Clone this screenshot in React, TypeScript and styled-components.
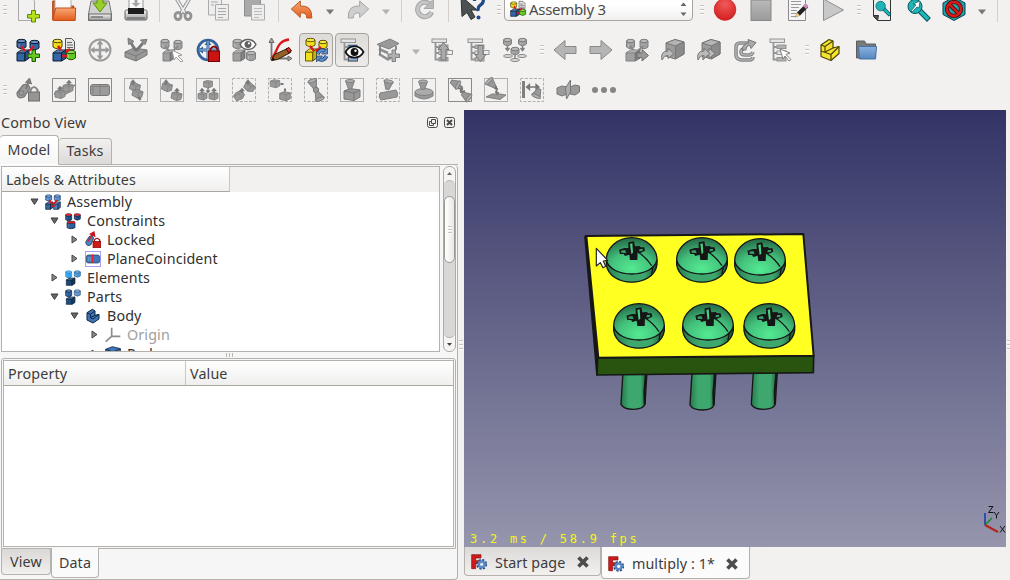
import React from "react";
import styled, { createGlobalStyle, css } from "styled-components";

const Global = createGlobalStyle`
  * { box-sizing: border-box; }
  html, body { margin: 0; padding: 0; overflow: hidden; background: #f2f1f0; }
  body { font-family: "Noto Sans", "Open Sans", sans-serif; font-size: 14.3px; letter-spacing: 0.13px; color: #3c3c3c; }
`;

/* ---------- drawing primitives for icons (24 x 24 grid) ---------- */

const GRAY = "#a0a0a0";
const GLINE = "#808080";
const BLUE = "#3465a4";
const NAVY = "#0b1f33";

type Shape = { x: number; y: number; w?: number; h?: number; c?: string; l?: string };

const Cyl = ({ x, y, w = 9, h = 10, c = GRAY, l = GLINE }: Shape) => (
  <g stroke={l} strokeWidth="1" fill={c}>
    <path d={`M${x} ${y + 2}v${h - 4}q${w / 2} 3.500 ${w} 0v${4 - h}z`} />
    <ellipse cx={x + w / 2} cy={y + 2} rx={w / 2} ry="1.700" />
    <ellipse cx={x + w / 2} cy={y + 2} rx={w / 2 - 1} ry="1" fill="#fff" fillOpacity=".3" stroke="none" />
    <path d={`M${x + 2} ${y + 5}v${h - 7}`} stroke="#fff" strokeOpacity=".3" />
  </g>
);

const Cube = ({ x, y, w = 11, h = 10, c = GRAY, l = GLINE }: Shape) => {
  const s = Math.max(2, h * 0.25);
  const f = w * 0.66;
  const d = w - f;
  return (
    <g stroke={l} strokeWidth="1" strokeLinejoin="round" fill={c}>
      <path d={`M${x} ${y + s}h${f}v${h - s}h${-f}z`} />
      <path d={`M${x} ${y + s}l${d} ${-s}h${f}l${-d} ${s}z`} />
      <path d={`M${x} ${y + s}l${d} ${-s}h${f}l${-d} ${s}z`} fill="#fff" fillOpacity=".18" stroke="none" />
      <path d={`M${x + f} ${y + s}l${d} ${-s}v${h - s}l${-d} ${s}z`} />
      <path d={`M${x + f} ${y + s}l${d} ${-s}v${h - s}l${-d} ${s}z`} fill="#000" fillOpacity=".18" stroke="none" />
    </g>
  );
};

const Plus = ({ x, y, c = GRAY, l = GLINE }: Shape) => (
  <path d={`M${x + 4} ${y}h3.500v4h4v3.500h-4v4h-3.500v-4h-4v-3.500h4z`} fill={c} stroke={l} />
);

const Frame = ({ dash, dark }: { dash?: boolean; dark?: boolean }) => (
  <rect x=".5" y=".5" width="23" height="23" fill="none" stroke={dark ? "#8a8a8a" : "#b0b0b0"} strokeDasharray={dash ? "3 1.500" : undefined} />
);

const UpArrow = ({ x, y }: Shape) => (
  <path d={`M${x} ${y}l-2.500 3h1.800v2h1.400v-2h1.800z`} fill="#777" stroke="#707070" strokeWidth=".4" />
);

/* a cube tilted as the constraint icons show it */
const Blob = ({ x, y, r = 0, s = 1 }: { x: number; y: number; r?: number; s?: number }) => (
  <g transform={`translate(${x} ${y}) rotate(${r}) scale(${s})`} stroke={GLINE} strokeWidth=".9" strokeLinejoin="round">
    <path d="M-5 -2.500L-1 -4L5 -3V2.500L1 4.500L-5 3z" fill="#999" />
    <path d="M-5 -2.500L1 -1.300L5 -3M1 -1.300V4.500" fill="none" strokeWidth=".7" />
  </g>
);

const Cone = ({ r = 0, x = 12, y = 7 }: { r?: number; x?: number; y?: number }) => (
  <g transform={`translate(${x} ${y}) rotate(${r})`} fill="#999" stroke={GLINE}>
    <path d="M-4.500 -3.500l3 8h3l3 -8z" />
    <ellipse cy="-3.500" rx="4.500" ry="1.500" fill="#b0b0b0" />
  </g>
);

const Tree = () => (
  <g fill="#e4e4e4" stroke="#949494">
    <path d="M4.500 4v17.500h4M4.500 9h4M4.500 15h4" fill="none" strokeWidth="1.800" />
    <rect x="1" y="1" width="14.500" height="3.500" />
    <rect x="8" y="7" width="9" height="3.500" fill="#b0b0b0" />
    <rect x="8" y="13" width="9" height="3.500" />
    <rect x="8" y="19.500" width="9" height="3.500" fill="#b0b0b0" />
  </g>
);

const Eye = ({ x, y, c = "#111", s = 1 }: { x: number; y: number; c?: string; s?: number }) => (
  <g transform={`translate(${x} ${y}) scale(${s})`}>
    <path d="M-9 0C-5 -7.500 5 -7.500 9 0C5 7.500 -5 7.500 -9 0z" fill="#fff" stroke={c} strokeWidth="1.700" />
    <circle r="3.900" fill={c} />
    <circle cx="1" cy="-1.300" r="1.200" fill="#fff" />
  </g>
);

const Bends = ({ g }: { g?: boolean }) => (
  <path d="M5 8l4 5M18 8l-5 5" stroke={g ? "#8a8a8a" : "#e0141c"} strokeWidth="2.200" fill="none" />
);

const FatArrow = ({ flip }: { flip?: boolean }) => (
  <g transform={flip ? "translate(24 0) scale(-1 1)" : undefined}>
    <path d="M1 12L12 2.500v6h11v7h-11v6z" fill="#b5b5b5" stroke="#898989" strokeLinejoin="round" />
  </g>
);

const Lens = () => (
  <g>
    <path d="M14 12l7 7" stroke="#06555a" strokeWidth="5.500" strokeLinecap="square" />
    <path d="M14 12l7 7" stroke="#1fb5b8" strokeWidth="3.500" strokeLinecap="square" />
    <circle cx="9" cy="7.500" r="7" fill="#1fb5b8" stroke="#06555a" />
  </g>
);

const CurveArrow = ({ o = 0 }: { o?: number }) => (
  <path d={`M${1 + o} 22q-2 -9 6 -9v-3l6 5.500l-6 5v-3q-4 -.5 -6 4.500z`} fill="#b9b9b9" stroke="#777" />
);

const IsoCube = () => (
  <g stroke="#777" strokeLinejoin="round">
    <path d="M5 5L14 1.500L23 4V16L14 21L5 18z" fill="#9c9c9c" />
    <path d="M5 5L14 1.500L23 4L14.500 8z" fill="#b4b4b4" />
    <path d="M14.500 8L23 4V16L14.500 21z" fill="#8b8b8b" />
  </g>
);

const icons: Record<string, React.ReactNode> = {
  newDoc: (
    <g>
      <path d="M2.500 -1h12l4 4v19.500h-16z" fill="#f1f1f1" stroke="#a8a8a8" />
      <path d="M15.500 12.500h4v4h4v3.500h-4v4h-4v-4h-4v-3.500h4z" fill="#b7e11c" stroke="#5f8708" />
    </g>
  ),
  open: (
    <g>
      <path d="M.7 22V3h7v5h14v14z" fill="#d35b1c" stroke="#b24411" />
      <path d="M3 20V-1h13l3 3v18z" fill="#fafafa" stroke="#b0b0b0" />
      <path d="M.7 22l3 -12h20l-.5 12.500h-22z" fill="url(#orange)" stroke="#c14f17" />
    </g>
  ),
  save: (
    <g>
      <path d="M3 3h18l2.500 13v6.500h-23v-6.500z" fill="#d0d0d0" stroke="#777" />
      <path d="M.8 16h22.400v6.300H.8z" fill="url(#metal)" stroke="#666" />
      <path d="M3 19h12" stroke="#777" strokeWidth="1.500" />
      <path d="M9 -2h6v7h4l-7 9l-7 -9h4z" fill="#98ce2a" stroke="#5c8f0c" />
    </g>
  ),
  print: (
    <g>
      <path d="M5 -1h14v12H5z" fill="#f7f7f7" stroke="#999" />
      <path d="M10.500 0h3v5h3l-4.500 4l-4.500 -4h3z" fill="#a5a5a5" />
      <rect x="1" y="12" width="22" height="10" rx="1.500" fill="url(#metal)" stroke="#666" />
      <path d="M4 10h16v6H4z" fill="#1d1d1d" />
      <path d="M3 20h18" stroke="#555" />
    </g>
  ),
  cut: (
    <g fill="none" stroke="#a2a2a2">
      <path d="M4.500 -1l10 17M19.500 -1l-10 17" stroke="#8f8f8f" strokeWidth="3.500" />
      <path d="M4.500 -1l10 17M19.500 -1l-10 17" stroke="#eee" strokeWidth="1.700" />
      <ellipse cx="7" cy="18" rx="3" ry="3.500" strokeWidth="2.800" stroke="#929292" />
      <ellipse cx="17" cy="18" rx="3" ry="3.500" strokeWidth="2.800" stroke="#929292" />
    </g>
  ),
  copy: (
    <g fill="#ededed" stroke="#aaa">
      <path d="M1.500 0h13v17h-13z" />
      <path d="M8.500 6.500h13v15.500h-13z" />
      <path d="M4 4h7M4 7h3M11 10.500h8M11 13.500h8M11 16.500h8M11 19.500h5" />
    </g>
  ),
  paste: (
    <g fill="#a9a9a9" stroke="#8e8e8e">
      <path d="M1.500 0h16v18h-16z" />
      <path d="M8.500 6.500h13v15.500h-13z" fill="#ededed" stroke="#aaa" />
      <path d="M11 10.500h8M11 13.500h8M11 16.500h8M11 19.500h5" stroke="#bbb" />
    </g>
  ),
  undo: <path d="M1.300 11l9 -8v5q12 -1 11.500 12h-5q0 -6 -6.500 -5v4.500z" fill="url(#orange)" stroke="#b95a22" strokeLinejoin="round" />,
  redo: <path d="M22.700 11l-9 -8v5q-12 -1 -11.500 12h5q0 -6 6.500 -5v4.500z" fill="#cfcfcf" stroke="#a3a3a3" strokeLinejoin="round" />,
  refresh: (
    <g>
      <path d="M18 6.500a7.200 7.200 0 1 0 1.500 7.500" fill="none" stroke="#a3a3a3" strokeWidth="5" />
      <path d="M18 6.500a7.200 7.200 0 1 0 1.500 7.500" fill="none" stroke="#c6c6c6" strokeWidth="3.200" />
      <path d="M21.500 1v9.500h-9.500z" fill="#bababa" stroke="#a8a8a8" />
    </g>
  ),
  whats: (
    <g>
      <path d="M1 -2l16 14h-6l4 7l-4 2.500l-4 -7l-5 4z" fill="#4c5252" stroke="#2c3030" />
      <path d="M14.500 3q0 -4 4.500 -4t4.300 3.700q0 2.500 -3 4.500t-2 5.800" fill="none" stroke="#204a87" strokeWidth="3.200" />
      <circle cx="18.500" cy="19.500" r="2" fill="#204a87" />
    </g>
  ),
  record: <circle cx="12" cy="11.500" r="10.800" fill="url(#red)" stroke="#c22" strokeWidth=".8" />,
  stop: <rect x="2" y="2" width="20" height="20.500" fill="url(#metal2)" stroke="#878787" />,
  edit: (
    <g>
      <path d="M3.500 -1h17v23.500h-17z" fill="#f5f5f5" stroke="#8a8a8a" />
      <path d="M6 3.500h10M6 6.500h10M6 9.500h8M6 12.500h6M6 15.500h5M6 18.500h5" stroke="#999" />
      <path d="M10 19.500l2 -5l8 -8l3 3l-8 8z" fill="#222" />
      <path d="M18 8l2.500 -3l3 3l-2.500 3z" fill="#c88ab3" />
      <path d="M10 19.500l2 -5l3 3z" fill="#edc98a" />
    </g>
  ),
  play: <path d="M2.500 1L22.500 12L2.500 22.500z" fill="#c8c8c8" stroke="#8e8e8e" />,
  fitAll: (
    <g>
      <path d="M3.500 -1h17v23.500h-13l-4 -4z" fill="#eee" stroke="#333" />
      <path d="M3.500 17.500h5l-1 5z" fill="#555" stroke="#333" />
      <g transform="translate(4.500 3) scale(.68)"><Lens /></g>
    </g>
  ),
  fitSel: <g transform="translate(0 1)"><Lens /><path d="M5 12l5 -6l-3 -1l7 -3l-1 7l-2 -1l-5 5z" fill="#fff" stroke="#06555a" strokeWidth=".7" /></g>,
  drawStyle: (
    <g>
      <path d="M1 5l11 -6l11 6v11.500l-11 6l-11 -6z" fill="#1ba4ad" stroke="#083f49" />
      <circle cx="12" cy="11" r="7" fill="none" stroke="#5a0808" strokeWidth="4.200" />
      <path d="M7 6l10 10" stroke="#5a0808" strokeWidth="4" />
      <circle cx="12" cy="11" r="7" fill="none" stroke="#d51c1c" strokeWidth="2.400" />
      <path d="M7 6l10 10" stroke="#d51c1c" strokeWidth="2.400" />
    </g>
  ),
  box: <Cube x={6} y={1} w={17} h={20} c="#bdd" l="#8a9a9a" />,
  asmNew: (
    <g>
      <Cyl x={1} y={1} c={BLUE} l={NAVY} /><Cyl x={14} y={2} c={BLUE} l={NAVY} />
      <Cube x={1} y={12} w={12} h={11} c={BLUE} l={NAVY} /><Bends />
      <Plus x={12} y={12} c="#67c920" l="#1d5905" />
    </g>
  ),
  asmPart: (
    <g>
      <Cyl x={1} y={1} c="#f2d90c" l="#4e4300" />
      <path d="M13.500 .5h6l3 3v8h-9z" fill="#e6e6e6" stroke="#555" />
      <path d="M15 4.500h5M15 7h6M15 9.500h6" stroke="#666" />
      <Cube x={1} y={12} w={13} h={11} c={BLUE} l={NAVY} />
      <Cyl x={14.500} y={12} c="#67c920" l="#1d5905" />
      <path d="M6 8l3 4M18 11l-4 3M10 18h5" stroke="#e0141c" strokeWidth="2.500" />
    </g>
  ),
  move: (
    <g fill="none" stroke={GLINE}>
      <circle cx="12" cy="12" r="10.500" strokeWidth="2" stroke="#9c9c9c" />
      <path d="M12 4v16M4 12h16" strokeWidth="2.400" stroke="#9c9c9c" />
      <path d="M12 2l-3.300 4.500h6.600zM12 22l-3.300 -4.500h6.600zM2 12l4.500 -3.300v6.600zM22 12l-4.500 -3.300v6.600z" fill="#999" stroke="none" />
    </g>
  ),
  axial: (
    <g strokeLinejoin="round">
      <path d="M1 14l9 -4l13 2v5l-11 6l-11 -4z" fill="#999" stroke="#777" />
      <path d="M1 14l11 4l11 -6M12 18v5" fill="none" stroke="#777" />
      <path d="M12 13L7 5M12 13L19 5" stroke="#777" strokeWidth="2.800" />
      <path d="M4 0l6 3.500l-5.500 3zM23 1.500l-6.500 .5l4.500 4.500z" fill="#909090" stroke="#777" />
    </g>
  ),
  asmSel: (
    <g>
      <Cyl x={1} y={1} w={8} /><Cyl x={14} y={2} w={8} /><Cube x={3} y={12} w={11} h={11} /><Bends g />
      <path d="M12 12l10 5l-4 1l5 5l-2 1l-5 -5l-2 3z" fill="#fff" stroke="#999" />
    </g>
  ),
  moveLock: (
    <g>
      <circle cx="12" cy="12" r="10" fill="none" strokeWidth="2.700" stroke="#35629b" />
      <path d="M12 3v18M3 12h18" strokeWidth="3" stroke="#35629b" />
      <path d="M12 2l-3.500 5h7zM2 12l5 -3.500v7z" fill="#35629b" />
      <path d="M12 3v18M3 12h18" stroke="#9bc3ea" />
      <path d="M14.500 14v-3q3.500 -5 7 0v3" fill="none" stroke="#8d0c0c" strokeWidth="2" />
      <rect x="12.500" y="13" width="11" height="10.500" fill="#c91414" stroke="#700" />
    </g>
  ),
  asmEye: (
    <g>
      <Cyl x={1} y={1} w={9} /><Cube x={1} y={12} w={12} h={11} /><Cyl x={14.500} y={13} w={9} />
      <Eye x={16} y={6.500} c="#606060" s={0.88} />
    </g>
  ),
  trace: (
    <g fill="none">
      <path d="M3.500 22V3M2 20.500h20" stroke="#777" strokeWidth="1.800" />
      <path d="M3.500 0l-2.500 4.500h5zM24 20.500l-4 -2.500v5z" fill="#aaa" stroke="#666" />
      <path d="M4 20C10 14 8 3 21 1.500" stroke="#d8161b" strokeWidth="2.300" />
      <path d="M3.500 22.500l3 -6l13 -6l3 4l-13 7z" fill="#93602a" stroke="#301b06" />
      <path d="M18 11l3 -1.500l2.500 3.500l-2.700 1.700z" fill="#d33" stroke="#400" />
      <path d="M3.500 22.500l1.500 -3l2 2.500z" fill="#111" />
    </g>
  ),
  asmAuto: (
    <g>
      <Cyl x={2} y={0} w={9} h={9} c="#f3df17" l="#625600" /><Cyl x={15} y={2} w={8} h={9} c="#f3df17" l="#625600" />
      <Cube x={1.500} y={11} w={11} h={12} c="#f3df17" l="#625600" />
      <path d="M6 8l4 5M17 9l-5 4" stroke="#e0141c" strokeWidth="2.300" />
      <path d="M13.500 16q3 -6 8 -2.500M22.500 18q-3 6 -8 2.500" fill="none" stroke="#1d3d68" strokeWidth="4" />
      <path d="M13.500 16q3 -6 8 -2.500M22.500 18q-3 6 -8 2.500" fill="none" stroke="#5d8fca" strokeWidth="2.400" />
      <path d="M23.500 10v6h-6zM12.500 24v-6h6z" fill="#5d8fca" stroke="#1d3d68" strokeWidth=".7" />
    </g>
  ),
  treeEye: <g><Tree /><rect x="8.500" y="7" width="9" height="4" fill={BLUE} /><rect x="8.500" y="19" width="9" height="4" fill="#8ab0d8" stroke="#555" /><Eye x={14.500} y={14} /></g>,
  layers: (
    <g fill="#999" stroke={GLINE} strokeLinejoin="round">
      <path d="M3 11l9 4M3 16l9 5.500l3 -2" fill="none" strokeWidth="2.500" stroke="#8d8d8d" />
      <path d="M4 8v9M20 8v4" strokeWidth="1.800" />
      <path d="M1 6.500l13 -5.500l9 4.500l-10 5.500z" />
      <Plus x={12} y={12} c="#b0b0b0" />
    </g>
  ),
  treeUp: <g><Tree /><rect x="16" y="12.500" width="5.500" height="4" fill="#eee" stroke="#999" /><path d="M12.500 4.500l-5.500 7h3v10.500h5v-10.500h3z" fill="#aaa" stroke="#777" /></g>,
  treeDown: <g><Tree /><rect x="16.500" y="12.500" width="5.500" height="4" fill="#eee" stroke="#999" /><path d="M13.500 23.500l-5.500 -7h3v-9h5v9h3z" fill="#aaa" stroke="#777" /></g>,
  asmTree: (
    <g>
      <g fill="#ddd" stroke="#858585"><ellipse cx="5" cy="18" rx="4.500" ry="1.500" /><ellipse cx="19" cy="18" rx="4.500" ry="1.500" /><ellipse cx="12" cy="22" rx="4.500" ry="1.500" /></g>
      <Cyl x={.5} y={0} w={8} h={8} /><Cyl x={15.500} y={0} w={8} h={8} /><Cyl x={8} y={9} w={8} h={8} />
      <path d="M12 17v4M4.500 8v4M19.500 8v4M2.500 10l2 2.500l2 -2.500M17.500 10l2 2.500l2 -2.500" stroke="#808080" fill="none" strokeWidth="1.500" />
    </g>
  ),
  back: <FatArrow />,
  forward: <FatArrow flip />,
  asmGo: (
    <g>
      <Cyl x={1.500} y={1} w={8} /><Cyl x={15} y={1} w={8} /><Bends g /><Cube x={1} y={12} w={14} h={11} />
      <path d="M12 15h5v-3.500l6.500 6l-6.500 5.500v-3.500h-5z" fill="#999" stroke="#6f6f6f" />
    </g>
  ),
  cubeGo: <g><IsoCube /><CurveArrow /></g>,
  cubeGo2: <g><IsoCube /><CurveArrow o={5} /><CurveArrow /></g>,
  linkGo: (
    <g fill="none">
      <path d="M15 5H7q-4 0 -4 4v8q0 4 5 5h8q4 0 4 -3M11 11q-3 0 -3 3t4 3h4q3 0 4 -3" stroke="#858585" strokeWidth="3.600" />
      <path d="M15 5H7q-4 0 -4 4v8q0 4 5 5h8q4 0 4 -3M11 11q-3 0 -3 3t4 3h4q3 0 4 -3" stroke="#bdbdbd" strokeWidth="1.200" />
      <path d="M9 12q1 -7 7 -7l-1 -3.500l8 3l-5 6l-1 -3q-4 0 -4 4.500z" fill="#aaa" stroke="#777" />
    </g>
  ),
  treeSel: <g><Tree /><path d="M11 11l10 4l-4 1.500l5 5l-2 1.500l-4 -5l-2 3z" fill="#fff" stroke="#808080" /></g>,
  yellowPart: (
    <g fill="#f5e332" stroke="#4e4500" strokeWidth="1.200" strokeLinejoin="round">
      <path d="M3 7L11 1.500L15 3V10L21 8.500V15.500L13 22.500L3 18.500z" />
      <path d="M3 7L7 8.500L15 3M7 8.500V14L15 10M3 13L13 16.500L21 8.500M13 16.500V22.500" fill="none" />
    </g>
  ),
  folder: (
    <g>
      <path d="M2.500 20V3h8l1.500 3h9.500v14z" fill="#77797a" stroke="#5b5c5d" />
      <path d="M4.500 8.500h18l-1 12.500h-16z" fill="url(#folder)" stroke="#48729f" />
    </g>
  ),
  lock: (
    <g>
      <path d="M1 15l6 -8q5 -2 7 3l-6 9q-7 3 -7 -4z" fill="#999" stroke="#777" strokeWidth="1.300" />
      <circle cx="5.500" cy="15" r="2.500" fill="none" stroke="#777" />
      <path d="M10 11l2.500 -7" stroke="#777" strokeWidth="1.800" />
      <path d="M9.500 4.500l4 -4.500l2 6z" fill="#808080" stroke="#777" />
      <path d="M14.500 15v-3q3.500 -6 7 0v3" fill="none" stroke="#888" strokeWidth="2.200" />
      <rect x="12.500" y="14" width="11" height="9" fill="#959595" stroke="#6d6d6d" />
    </g>
  ),
  plane: (
    <g><Frame dark /><path d="M2 16l7 -6l14 -3l-7 8l-8 4z" fill="#aaa" stroke="#808080" /><Blob x={8} y={16} /><Blob x={16} y={10} /><UpArrow x={8} y={8} /><UpArrow x={17} y={2} /></g>
  ),
  coincident: <g><Frame dark /><rect x="2.500" y="6.500" width="19" height="11" rx="2.500" fill="#9c9c9c" stroke="#777" /><path d="M12 7v10M4 8.500h16M5 9v7" stroke="#808080" /></g>,
  axialTwo: <g><Frame /><Blob x={11} y={9} r={15} /><Blob x={13.500} y={15.500} r={15} /><UpArrow x={9} y={1.500} /><path d="M14.500 19l2 3" stroke="#777" strokeWidth="2.500" /></g>,
  angle: <g><Frame /><Blob x={7} y={9} r={12} /><Blob x={16.500} y={18} r={12} /><UpArrow x={6} y={1.500} /><UpArrow x={17} y={10} /></g>,
  multi: <g><Frame /><Blob x={12} y={6} s={0.9} /><Blob x={6.500} y={18} s={0.9} /><Blob x={17.500} y={18} s={0.9} /><UpArrow x={6} y={10} /><UpArrow x={18} y={10} /><path d="M12 10v4M10.300 12.500l1.700 2l1.700 -2" stroke="#777" fill="none" strokeWidth="1.300" /></g>,
  dashA: <g><Frame dash /><Blob x={7} y={17.500} r={-35} /><Blob x={17.500} y={9} r={30} /><UpArrow x={10} y={10} /><UpArrow x={16} y={1.500} /></g>,
  dashB: <g><Frame dash /><Blob x={7} y={5.500} s={0.95} /><Blob x={17} y={18} s={1.050} /><path d="M12.500 6h3M17 13.500v-3" stroke="#777" strokeWidth="2" /></g>,
  cones: <g><Frame dash /><Cone r={-20} x={9.500} y={6} /><circle cx="12" cy="12" r="2.700" fill="#999" stroke="#777" /><Cone r={155} x={14.500} y={18} /></g>,
  coneCube: <g><Frame /><path d="M4 13l6 -2.500l10 1.500v7l-6 3.500l-10 -1.500z" fill="#999" stroke="#777" /><path d="M4 13l10 2l6 -3M14 15v7.500" fill="none" stroke="#777" /><Cone x={10} y={6.500} /></g>,
  coneCyl: <g><Frame dash /><path d="M4 15l16 -3q3 4 1 7l-16 3q-3 -3 -1 -7z" fill="#999" stroke={GLINE} /><Cone x={12} y={7} r={10} /></g>,
  coneDisc: <g><Frame /><path d="M3 14v4q9 6 18 0v-4z" fill="#999" stroke={GLINE} /><ellipse cx="12" cy="14" rx="9" ry="3.500" fill="#ababab" stroke={GLINE} /><Cone x={11} y={7} /></g>,
  coneChain: <g><Frame dark /><Cone x={7} y={5.500} r={118} /><path d="M11 7l3 2l-1.500 4l4 3M10 10l5 1M12 14l5 -1" stroke="#777" strokeWidth="1.800" fill="none" /><Cone x={18} y={18} r={125} /></g>,
  conePlane: <g><Frame /><path d="M2 19l6 -3h8l6 1l-6 4.500z" fill="#999" stroke={GLINE} /><Cone x={7.500} y={5.500} r={-45} /><path d="M12 8l1 9M10 10l4 1M11 14l4 1" stroke="#777" strokeWidth="1.800" /></g>,
  dist: <g><Frame dash /><path d="M3.500 3v17" stroke="#808080" strokeWidth="3" /><path d="M7 9h12M6.500 9l3 -2.500v5zM19 9l-3 -2.500v5z" stroke="#777" strokeWidth="1.300" fill="#777" /><Cone x={17.500} y={15} r={205} /></g>,
  mirror: <g><path d="M1 10l5 -2l5 1v7l-5 2l-5 -2zM14 9l5 -2l4.500 1v6l-4.500 3l-5 -1z" fill="#9a9a9a" stroke="#777" /><path d="M9.500 10l5 -8v12l-4 7z" fill="#adadad" stroke="#777" /></g>,
  dots: <g fill="#858585"><circle cx="3" cy="12" r="3" /><circle cx="12" cy="12" r="3" /><circle cx="21" cy="12" r="3" /></g>,
  treeAsm: (
    <g><Cyl x={1} y={1} w={9} c="#5a8fd0" l="#1d3c68" /><Cyl x={14} y={1} w={9} c="#5a8fd0" l="#1d3c68" /><Cube x={1} y={12} w={11} h={11} c={BLUE} l={NAVY} /><Cube x={13} y={12} w={10} h={11} c="#4d83c4" l={NAVY} /><path d="M6 9l4 5h4l4 -5M9 18h7" stroke="#d41a20" strokeWidth="2.500" fill="none" /></g>
  ),
  treeCons: (
    <g><Cyl x={1} y={1} w={9} h={11} c="#1f4a80" l="#0c203a" /><Cyl x={14} y={1} w={9} c="#1f4a80" l="#0c203a" /><Cyl x={3} y={12} w={12} h={12} c="#2b5f9f" l={NAVY} /><path d="M1 2.500h9M14 2.500h9M3 14h12" stroke="#e01b22" strokeWidth="2.500" fill="none" /></g>
  ),
  treeLock: (
    <g><path d="M1 15l5 -8q5 -3 7 2l-4 10q-7 4 -8 -4z" fill="#4d83c4" stroke={NAVY} /><path d="M4 14l5 -6M8 8l4 -5M8 3l5.500 -3l1 6z" stroke="#c8161c" strokeWidth="2" fill="#c8161c" /><path d="M14 15v-3q4 -5 8 0v3" fill="none" stroke="#a31212" strokeWidth="2" /><rect x="12" y="14" width="11.500" height="9.500" fill="#cf1a1a" stroke="#800" /></g>
  ),
  treeCoin: <g><rect x=".7" y=".7" width="22.600" height="22.600" fill="#fff" stroke="#9c9cf4" strokeWidth="1.400" /><rect x="2" y="6" width="20" height="12" rx="3" fill="#4077b8" stroke="#16365e" /><path d="M11.500 5v13" stroke="#e4242a" strokeWidth="2" /><path d="M5 9v6M8 9v6" stroke="#86b4e0" /></g>,
  treeElem: <g><Cyl x={1} y={1} w={9} h={11} c="#2ea2ea" l="#2389d0" /><Cyl x={14} y={1} w={9} c="#4d9ad4" l="#1d5a90" /><Cube x={2} y={12} w={13} h={11} c="#1c4677" l={NAVY} /></g>,
  treeParts: <g><Cyl x={1} y={1} w={9} h={11} c="#2b5f9f" l={NAVY} /><Cyl x={14} y={1} w={9} c="#6596cc" l="#2d527f" /><Cube x={2} y={12} w={13} h={11} c="#1f4d85" l={NAVY} /></g>,
  body: <g fill="#3e76b8" stroke="#0d2544" strokeWidth="1.500" strokeLinejoin="round"><path d="M3 7L11 2L15 4.500V11L21 9.500V16.500L12 22.500L3 18z" /><path d="M3 7L8 9.500L15 4.500M8 9.500V14.500L15 11M8 14.500L12 16.500L21 9.500" fill="none" /></g>,
  origin: <path d="M10 1v13H23M10 14L1 22" stroke="#8c8c8c" strokeWidth="2.500" fill="none" />,
  pad: <g fill="#3e76b8" stroke="#0d2544" strokeWidth="1.300"><path d="M1 5l10 -4l12 3v14l-11 5l-11 -4z" /><path d="M1 5l11 4l11 -5M12 9v14" fill="none" /></g>,
  freecad: (
    <g>
      <path d="M1 1h14v5H7v4h6v4.500H7V22H1z" fill="#d01a1a" stroke="#7e0d0d" />
      <g transform="translate(16 15.500)">
        <circle r="6.200" fill="none" stroke="#24477c" strokeWidth="4" strokeDasharray="2.870 2" />
        <circle r="4.400" fill="none" stroke="#5888c8" strokeWidth="3.800" />
      </g>
    </g>
  ),
};

const Svg = styled.svg`
  display: block;
  overflow: visible;
  flex: none;
`;
const Icon = ({ name, size = 24 }: { name: string; size?: number }) => (
  <Svg width={size} height={size} viewBox="0 0 24 24">{icons[name]}</Svg>
);

const HiddenDefs = styled.svg`
  position: absolute;
`;
const Gradients = () => (
  <HiddenDefs width="0" height="0">
    <defs>
      <linearGradient id="orange" x1="0" y1="0" x2="0" y2="1"><stop offset="0" stopColor="#f7a876" /><stop offset="1" stopColor="#e35c1c" /></linearGradient>
      <linearGradient id="metal" x1="0" y1="0" x2="0" y2="1"><stop offset="0" stopColor="#f4f4f4" /><stop offset="1" stopColor="#9a9a9a" /></linearGradient>
      <linearGradient id="metal2" x1="0" y1="0" x2="0" y2="1"><stop offset="0" stopColor="#b9b9b9" /><stop offset="1" stopColor="#9b9b9b" /></linearGradient>
      <linearGradient id="folder" x1="0" y1="0" x2="0" y2="1"><stop offset="0" stopColor="#8ab2df" /><stop offset="1" stopColor="#5586c0" /></linearGradient>
      <radialGradient id="red" cx=".5" cy=".25" r=".75"><stop offset="0" stopColor="#ef5a5a" /><stop offset="1" stopColor="#d41f1f" /></radialGradient>
      <radialGradient id="dome" cx=".5" cy=".85" r=".85"><stop offset="0" stopColor="#54ea92" /><stop offset=".5" stopColor="#43c07b" /><stop offset="1" stopColor="#246746" /></radialGradient>
      <linearGradient id="band"><stop offset="0" stopColor="#267a4e" /><stop offset=".3" stopColor="#3da76d" /><stop offset=".75" stopColor="#3da76d" /><stop offset="1" stopColor="#1d5437" /></linearGradient>
    </defs>
  </HiddenDefs>
);

/* ---------- toolbars ---------- */

const Window = styled.div`
  width: 1010px;
  height: 580px;
  overflow: hidden;
  display: flex;
  flex-direction: column;
  background: #f2f1f0;
`;
const Toolbars = styled.div`
  flex: none;
  height: 110px;
  display: flex;
  flex-direction: column;
  justify-content: flex-end;
`;
const Toolbar = styled.div`
  height: 40px;
  flex: none;
  display: flex;
  align-items: center;
`;
const Slot = styled.div`
  width: 36px;
  flex: none;
  display: flex;
  justify-content: center;
`;
const ToolButton = styled.div<{ $on?: boolean }>`
  width: 34px;
  height: 34px;
  display: flex;
  align-items: center;
  justify-content: center;
  border-radius: 4px;
  ${(p) => p.$on && css`
    border: 1px solid #a8a39c;
    background: linear-gradient(#dedcd9, #ecebe9);
  `}
`;
const GripBox = styled.div<{ $w: number }>`
  width: ${(p) => p.$w}px;
  flex: none;
  display: flex;
  flex-direction: column;
  align-items: flex-end;
  gap: 2px;
  padding-right: 3px;
`;
const GripLine = styled.i`
  width: 4px;
  height: 2px;
  background: #c6c3bf;
  border-bottom: 1px solid #fff;
`;
const Grip = ({ w }: { w: number }) => (
  <GripBox $w={w}><GripLine /><GripLine /><GripLine /></GripBox>
);
const SepBox = styled.div<{ $w: number }>`
  width: ${(p) => p.$w}px;
  height: 24px;
  flex: none;
  display: flex;
  justify-content: center;
  &::after { content: ""; width: 1px; background: #d3d0cc; }
`;
const CaretBox = styled.div<{ $w: number }>`
  width: ${(p) => p.$w}px;
  flex: none;
  display: flex;
  justify-content: center;
  padding-top: 3px;
`;
const Caret = ({ w, dim }: { w: number; dim?: boolean }) => (
  <CaretBox $w={w}>
    <Svg width="8" height="6"><path d="M0 .5h8L4 5.500z" fill={dim ? "#b5b2ae" : "#777"} /></Svg>
  </CaretBox>
);
const Combo = styled.div`
  width: 189px;
  height: 28px;
  margin-top: -6px;
  padding: 0 5px 0 5px;
  flex: none;
  display: flex;
  align-items: center;
  gap: 3px;
  border: 1px solid #a9a49d;
  border-radius: 4px;
  background: linear-gradient(#fff 40%, #f1f0ef);
  color: #4b4b4b;
  font-size: 15px;
`;
const ComboLabel = styled.span`
  flex: 1;
  padding-top: 3px;
  line-height: 20px;
  letter-spacing: -0.3px;
`;
const ComboPart = styled.span`
  padding-top: 3px;
`;
const Tools = ({ names, on = [] }: { names: string[]; on?: string[] }) => (
  <>
    {names.map((n) => (
      <Slot key={n}><ToolButton $on={on.includes(n)}><Icon name={n} /></ToolButton></Slot>
    ))}
  </>
);

/* ---------- left dock ---------- */

const Main = styled.div`
  flex: 1;
  display: flex;
  min-height: 0;
`;
const Dock = styled.div`
  width: 458px;
  flex: none;
  display: flex;
  flex-direction: column;
`;
const DockTitle = styled.div`
  height: 25px;
  flex: none;
  display: flex;
  align-items: center;
  gap: 6px;
  padding: 0 3px 0 1px;
  letter-spacing: 0.2px;
  & > span { flex: 1; }
`;
const TabRow = styled.div`
  height: 30px;
  flex: none;
  display: flex;
  align-items: flex-end;
`;
const TopTab = styled.div<{ $active?: boolean; $w: number }>`
  width: ${(p) => p.$w}px;
  height: ${(p) => (p.$active ? 30 : 27)}px;
  line-height: ${(p) => (p.$active ? 27 : 24)}px;
  text-align: center;
  border: 1px solid #b5b1ac;
  border-left-width: 0;
  border-bottom-color: ${(p) => (p.$active ? "transparent" : "#b5b1ac")};
  border-radius: 4px 4px 0 0;
  background: ${(p) => (p.$active ? "linear-gradient(#fff, #f7f6f6)" : "linear-gradient(#f2f1f0, #dcdad8)")};
`;
const TabFill = styled.div`
  flex: 1;
  height: 1px;
  background: #b5b1ac;
`;
const Pane = styled.div`
  flex: 1;
  min-height: 0;
  display: flex;
  flex-direction: column;
  padding: 1px 0 0 1px;
  border-right: 1px solid #b5b1ac;
  border-bottom: 1px solid #b5b1ac;
  border-radius: 0 4px 4px 0;
  background: #f7f6f6;
`;
const TreeArea = styled.div`
  height: 186px;
  flex: none;
  display: flex;
  gap: 3px;
`;
const TreeFrame = styled.div`
  width: 439px;
  border: 1px solid #b5b1ac;
  background: #fff;
  overflow: hidden;
`;
const HeaderBar = styled.div`
  height: 25px;
  display: flex;
  background: #f2f1f0;
`;
const HeaderCell = styled.div<{ $w: number }>`
  width: ${(p) => p.$w}px;
  padding-left: 4px;
  line-height: 25px;
  border-right: 1px solid #c9c6c2;
  border-bottom: 1px solid #aaa6a0;
  background: linear-gradient(#fff, #f0efee);
`;
const TreeRow = styled.div<{ $level: number; $dim?: boolean }>`
  height: 19px;
  display: flex;
  align-items: center;
  padding-left: ${(p) => 28 + p.$level * 20}px;
  color: ${(p) => (p.$dim ? "#a0a0a0" : "#303030")};
`;
const Twist = styled.div`
  width: 15px;
  flex: none;
`;
const RowLabel = styled.span`
  padding-left: 6px;
  line-height: 19px;
`;
const Scroll = styled.div`
  width: 13px;
  display: flex;
  flex-direction: column;
  border: 1px solid #aeaaa5;
  border-radius: 6px;
  background: #f6f5f4;
  overflow: hidden;
`;
const ScrollEnd = styled.div`
  height: 13px;
  display: flex;
  align-items: center;
  justify-content: center;
`;
const ScrollTrack = styled.div`
  flex: 1;
  border: 1px solid #b5b1ac;
  border-width: 1px 0;
  border-radius: 6px;
  padding-top: 15px;
  background: #d9d7d5;
`;
const Thumb = styled.div`
  height: 67px;
  border: 1px solid #9c9791;
  border-radius: 6px;
  background: linear-gradient(90deg, #fff, #e9e8e6);
  display: flex;
  flex-direction: column;
  justify-content: center;
  align-items: center;
  gap: 1px;
`;
const Splitter = styled.div`
  height: 6px;
  flex: none;
  display: flex;
  gap: 2px;
  align-items: center;
  justify-content: center;
  & > i { width: 1px; height: 4px; background: #b9b6b1; }
`;
const PropOuter = styled.div`
  height: 191px;
  flex: none;
  padding: 1px;
  margin-right: 1px;
  border: 1px solid #b5b1ac;
  border-radius: 3px 3px 0 0;
  display: flex;
`;
const PropTable = styled.div`
  width: 451px;
  border: 1px solid #b5b1ac;
  background: #fff;
`;
const PropHeader = styled.div`
  height: 25px;
  display: flex;
  background: linear-gradient(#fff, #f0efee);
  border-bottom: 1px solid #aaa6a0;
`;
const PropCell = styled.div<{ $w?: number }>`
  ${(p) => (p.$w ? `width: ${p.$w}px; border-right: 1px solid #c9c6c2;` : "flex: 1;")}
  padding-left: 4px;
  line-height: 25px;
`;
const BottomTabs = styled.div`
  flex: 1;
  display: flex;
  align-items: flex-start;
`;
const BottomTab = styled.div<{ $active?: boolean; $w: number }>`
  width: ${(p) => p.$w}px;
  height: ${(p) => (p.$active ? 30 : 26)}px;
  margin-top: ${(p) => (p.$active ? -1 : 0)}px;
  line-height: ${(p) => (p.$active ? 29 : 25)}px;
  text-align: center;
  border: 1px solid #b5b1ac;
  border-top: 0;
  border-radius: 0 0 4px 4px;
  background: ${(p) => (p.$active ? "#fbfafa" : "linear-gradient(#dad8d6, #f1f0ef)")};
`;

const Arrow = ({ kind }: { kind?: "open" | "closed" }) => (
  <Twist>
    {kind === "open" && <Svg width="9" height="8"><path d="M1 1h7L4.500 6.500z" fill="#666" stroke="#3d3d3d" /></Svg>}
    {kind === "closed" && <Svg width="9" height="9"><path d="M2 1v7L7 4.500z" fill="#888" stroke="#444" /></Svg>}
  </Twist>
);

type Node = { level: number; kind: "open" | "closed"; icon: string; label: string; dim?: boolean };
const nodes: Node[] = [
  { level: 0, kind: "open", icon: "treeAsm", label: "Assembly" },
  { level: 1, kind: "open", icon: "treeCons", label: "Constraints" },
  { level: 2, kind: "closed", icon: "treeLock", label: "Locked" },
  { level: 2, kind: "closed", icon: "treeCoin", label: "PlaneCoincident" },
  { level: 1, kind: "closed", icon: "treeElem", label: "Elements" },
  { level: 1, kind: "open", icon: "treeParts", label: "Parts" },
  { level: 2, kind: "open", icon: "body", label: "Body" },
  { level: 3, kind: "closed", icon: "origin", label: "Origin", dim: true },
  { level: 3, kind: "closed", icon: "pad", label: "Pad" },
];

/* ---------- 3D view ---------- */

const DockHandle = styled.div`
  width: 6px;
  flex: none;
  display: flex;
  flex-direction: column;
  align-items: center;
  justify-content: center;
  gap: 2px;
`;
const MdiArea = styled.div`
  width: 542px;
  display: flex;
  flex-direction: column;
`;
const Viewport = styled.div`
  height: 437px;
  flex: none;
  position: relative;
  background: linear-gradient(#333366, #65658a 50%, #9595ad);
`;
const Fps = styled.div`
  position: absolute;
  left: 6px;
  bottom: 0;
  font: 12px/16px "DejaVu Sans Mono", monospace;
  letter-spacing: 2.75px;
  color: #f4f41c;
  white-space: pre;
`;
const DocTabs = styled.div`
  display: flex;
  align-items: flex-start;
`;
const DocTab = styled.div<{ $active?: boolean; $w: number }>`
  width: ${(p) => p.$w}px;
  height: ${(p) => (p.$active ? 32 : 29)}px;
  display: flex;
  align-items: center;
  padding: ${(p) => (p.$active ? "2px 11px 0 6px" : "2px 11px 0 6px")};
  border: 1px solid #b5b1ac;
  border-top: 0;
  border-radius: 0 0 4px 4px;
  background: ${(p) => (p.$active ? "#fcfbfb" : "linear-gradient(#dcdad8, #f2f1f0)")};
  & > span { flex: 1; padding-left: 8px; letter-spacing: 0.08px; white-space: nowrap; }
`;
const Close = () => (
  <Svg width="12" height="12"><path d="M1.500 1.500l9 9M10.500 1.500l-9 9" stroke="#4c4c4c" strokeWidth="3.600" /></Svg>
);

const Pin = ({ x, y = 0 }: { x: number; y?: number }) => (
  <g transform={`translate(${x} ${y})`}>
    <path d="M6 -10L0 88Q8 103 37 103Q66 103 72 88L78 -10z" fill="url(#band)" stroke="#161616" strokeWidth="4" />
    <path d="M75 -8L70 50L71 88" stroke="#161616" strokeWidth="6" fill="none" />
  </g>
);
const Screw = ({ x, y }: { x: number; y: number }) => (
  <g transform={`translate(${x} ${y})`} stroke="#161616" strokeWidth="4">
    <path d="M-76 0V14C-66 84 66 84 76 14V0z" fill="url(#band)" />
    <path d="M-76 0A76 67 0 0 1 76 0C64 56 -64 56 -76 0z" fill="url(#dome)" />
    <path d="M64 20L60 42" fill="none" />
    <path d="M18 -24Q42 -10 60 17" fill="none" />
    <path d="M-10 -53L7 -56L10 -41L24 -42L27 -38L38 -38L40 -28L24 -20L18 -24L17 0H-5L-7 -16L-20 -12L-24 -18H-35L-38 -31L-22 -36H-10z" fill="#161616" stroke="none" />
    <path d="M-5 -48L2 -50L4 -22L-1 -18z" fill="#45d182" stroke="none" />
    <path d="M-32 -28L-20 -30L-16 -21L-31 -22zM24 -33L34 -33L32 -27L22 -26z" fill="#37a169" stroke="none" />
  </g>
);

const Scene = () => (
  <Svg width="542" height="437" viewBox="0 0 542 437">
    <g transform="translate(111 115) scale(.33333)" strokeLinejoin="round">
      <Pin x={138} y={450} /><Pin x={345} y={452} /><Pin x={529} y={450} />
      <path d="M32 32L70 398L66 450L30 36z" fill="#171717" stroke="#171717" strokeWidth="5" />
      <path d="M68 398L716 392L715 443L66 450z" fill="#28540f" stroke="#171717" strokeWidth="5" />
      <path d="M34 33L685 27L716 392L70 398z" fill="#ffff22" stroke="#171717" strokeWidth="6" />
      <Screw x={170} y={105} /><Screw x={381} y={105} /><Screw x={555} y={108} />
      <Screw x={192} y={303} /><Screw x={399} y={303} /><Screw x={583} y={303} />
      <path d="M64 70V123L76 113L84 128L92 124L85 108L98 106z" fill="#fff" stroke="#222" strokeWidth="3.500" />
    </g>
    <g fill="none">
      <path d="M521 415V403" stroke="#2245a5" strokeWidth="1.700" />
      <path d="M521 415L528 408" stroke="#168a20" strokeWidth="1.500" />
      <path d="M521 415L534 422" stroke="#b4231c" strokeWidth="2" />
      <path d="M524.500 396.500h4.500l-4.500 6h5M530 402l2.500 3.500l2.500 -3.500M532.500 405v3.500M536 416l5 6.500M541 416l-5 6.500" stroke="#151515" />
    </g>
  </Svg>
);

export default function App() {
  return (
    <Window>
      <Global />
      <Gradients />
      <Toolbars>
        <Toolbar>
          <Grip w={10} />
          <Tools names={["newDoc", "open", "save", "print"]} />
          <SepBox $w={11} />
          <Tools names={["cut", "copy", "paste"]} />
          <SepBox $w={11} />
          <Tools names={["undo"]} /><Caret w={20} />
          <Tools names={["redo"]} /><Caret w={20} dim />
          <SepBox $w={10} />
          <Tools names={["refresh"]} />
          <SepBox $w={12} />
          <Tools names={["whats"]} />
          <Grip w={14} />
          <Combo>
            <ComboPart><Icon name="asmPart" size={16} /></ComboPart>
            <ComboLabel>Assembly 3</ComboLabel>
            <ComboPart>
              <Svg width="7" height="14"><path d="M.5 4h6L3.500 .5zM.5 10.500h6L3.500 14z" fill="#666" /></Svg>
            </ComboPart>
          </Combo>
          <Grip w={14} />
          <Tools names={["record", "stop", "edit", "play"]} />
          <Grip w={13} />
          <Tools names={["fitAll", "fitSel", "drawStyle"]} />
          <Caret w={20} />
          <SepBox $w={11} />
          <Tools names={["box"]} />
        </Toolbar>
        <Toolbar>
          <Grip w={10} />
          <Tools
            names={["asmNew", "asmPart", "move", "axial", "asmSel", "moveLock", "asmEye", "trace", "asmAuto", "treeEye", "layers"]}
            on={["asmAuto", "treeEye"]}
          />
          <Caret w={19} dim />
          <Tools names={["treeUp", "treeDown", "asmTree"]} />
          <Grip w={14} />
          <Tools names={["back", "forward", "asmGo", "cubeGo", "cubeGo2", "linkGo", "treeSel"]} />
          <Grip w={13} />
          <Tools names={["yellowPart", "folder"]} />
        </Toolbar>
        <Toolbar>
          <Grip w={10} />
          <Tools
            names={["lock", "plane", "coincident", "axialTwo", "angle", "multi", "dashA", "dashB", "cones", "coneCube", "coneCyl", "coneDisc", "coneChain", "conePlane", "dist", "mirror", "dots"]}
          />
        </Toolbar>
      </Toolbars>
      <Main>
        <Dock>
          <DockTitle>
            <span>Combo View</span>
            <Svg width="11" height="11" fill="none" stroke="#4a4a4a"><rect x=".5" y=".5" width="10" height="10" rx="2" /><path d="M4.500 2.500h4v4h-4zM4.500 4.500h-2v4h4v-2" /></Svg>
            <Svg width="11" height="11" fill="none" stroke="#4a4a4a"><rect x=".5" y=".5" width="10" height="10" rx="2" /><path d="M3 3l5 5M8 3l-5 5" strokeWidth="2" /></Svg>
          </DockTitle>
          <TabRow>
            <TopTab $active $w={59}>Model</TopTab>
            <TopTab $w={53}>Tasks</TopTab>
            <TabFill />
          </TabRow>
          <Pane>
            <TreeArea>
              <TreeFrame>
                <HeaderBar><HeaderCell $w={228}>Labels &amp; Attributes</HeaderCell></HeaderBar>
                {nodes.map((n, i) => (
                  <TreeRow key={i} $level={n.level} $dim={n.dim}>
                    <Arrow kind={n.kind} />
                    <Icon name={n.icon} size={16} />
                    <RowLabel>{n.label}</RowLabel>
                  </TreeRow>
                ))}
              </TreeFrame>
              <Scroll>
                <ScrollEnd><Svg width="5" height="3"><path d="M0 3h5L2.500 0z" fill="#666" /></Svg></ScrollEnd>
                <ScrollTrack><Thumb><GripLine /><GripLine /><GripLine /></Thumb></ScrollTrack>
                <ScrollEnd><Svg width="5" height="3"><path d="M0 0h5L2.500 3z" fill="#444" /></Svg></ScrollEnd>
              </Scroll>
            </TreeArea>
            <Splitter><i /><i /><i /></Splitter>
            <PropOuter>
              <PropTable>
                <PropHeader><PropCell $w={182}>Property</PropCell><PropCell>Value</PropCell></PropHeader>
              </PropTable>
            </PropOuter>
            <BottomTabs>
              <BottomTab $w={50}>View</BottomTab>
              <BottomTab $active $w={48}>Data</BottomTab>
            </BottomTabs>
          </Pane>
        </Dock>
        <DockHandle><GripLine /><GripLine /><GripLine /></DockHandle>
        <MdiArea>
          <Viewport>
            <Scene />
            <Fps>3.2 ms / 58.9 fps</Fps>
          </Viewport>
          <DocTabs>
            <DocTab $w={137}><Icon name="freecad" size={16} /><span>Start page</span><Close /></DocTab>
            <DocTab $active $w={149}><Icon name="freecad" size={16} /><span>multiply : 1*</span><Close /></DocTab>
          </DocTabs>
        </MdiArea>
        <DockHandle><GripLine /><GripLine /><GripLine /></DockHandle>
      </Main>
    </Window>
  );
}
